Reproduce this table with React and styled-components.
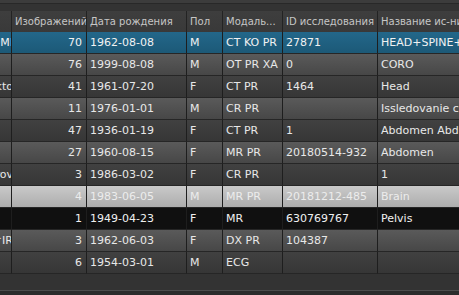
import React, { useLayoutEffect, useRef } from "react";
import styled, { createGlobalStyle, css } from "styled-components";

const GlobalStyle = createGlobalStyle`
  html, body {
    margin: 0;
    padding: 0;
    background: #2e2e2e;
  }
  * { box-sizing: border-box; }
`;

const columns = [
  { key: "name", width: 100, align: "clip" },
  { key: "images", title: "Изображений", width: 75, align: "right" },
  { key: "birth", title: "Дата рождения", width: 100 },
  { key: "sex", title: "Пол", width: 36 },
  { key: "modality", title: "Модаль...", width: 60 },
  { key: "studyId", title: "ID исследования", width: 95 },
  { key: "studyName", title: "Название ис-ния", width: 170 },
];

const rows = [
  { name: "KOVALEV^DMI", images: 70, birth: "1962-08-08", sex: "M", modality: "CT KO PR", studyId: "27871", studyName: "HEAD+SPINE+NECK", state: "selected" },
  { name: "", images: 76, birth: "1999-08-08", sex: "M", modality: "OT PR XA", studyId: "0", studyName: "CORO" },
  { name: "Pacient Ikto", images: 41, birth: "1961-07-20", sex: "F", modality: "CT PR", studyId: "1464", studyName: "Head" },
  { name: "", images: 11, birth: "1976-01-01", sex: "M", modality: "CR PR", studyId: "", studyName: "Issledovanie cheloveka" },
  { name: "", images: 47, birth: "1936-01-19", sex: "F", modality: "CT PR", studyId: "1", studyName: "Abdomen Abdomen" },
  { name: "", images: 27, birth: "1960-08-15", sex: "F", modality: "MR PR", studyId: "20180514-932", studyName: "Abdomen" },
  { name: "Petrov", images: 3, birth: "1986-03-02", sex: "F", modality: "CR PR", studyId: "", studyName: "1" },
  { name: "", images: 4, birth: "1983-06-05", sex: "M", modality: "MR PR", studyId: "20181212-485", studyName: "Brain", state: "light" },
  { name: "", images: 1, birth: "1949-04-23", sex: "F", modality: "MR", studyId: "630769767", studyName: "Pelvis", state: "hover" },
  { name: "SIDOROVA^IR", images: 3, birth: "1962-06-03", sex: "F", modality: "DX PR", studyId: "104387", studyName: "" },
  { name: "", images: 6, birth: "1954-03-01", sex: "M", modality: "ECG", studyId: "", studyName: "" },
];

const Page = styled.div`
  width: 459px;
  height: 295px;
  display: flex;
  flex-direction: column;
  background: #343434;
  font-family: "DejaVu Sans", Verdana, sans-serif;
  overflow: hidden;
`;

const TopStrip = styled.div`
  height: 11px;
  flex: none;
  background: linear-gradient(#3c3c3c 0, #3c3c3c 3px, #282828 3px, #282828 4px, #333 4px);
`;

const Viewport = styled.div`
  flex: none;
  overflow: hidden;
`;

const Grid = styled.div`
  display: grid;
  grid-template-columns: ${(p) => p.$template};
  width: max-content;
`;

const HeaderCell = styled.div`
  height: 21px;
  display: flex;
  align-items: center;
  padding: 0 3px;
  font-size: 10px;
  color: #c6c6c6;
  white-space: nowrap;
  overflow: hidden;
  background: linear-gradient(#3e3e3e, #393939);
  border-right: 1px solid #232323;
`;

const rowTones = {
  selected: css`
    background: linear-gradient(#23678a, #1c5977);
    color: #f2f2f2;
  `,
  light: css`
    background: linear-gradient(#c9c9c9, #adadad);
    color: #ececec;
  `,
  hover: css`
    background: #101010;
    color: #f0f0f0;
  `,
  odd: css`
    background: linear-gradient(#5a5a5a, #474747);
    color: #e8e8e8;
  `,
  even: css`
    background: linear-gradient(#414141, #363636);
    color: #e8e8e8;
  `,
};

const Cell = styled.div`
  height: 22px;
  display: flex;
  align-items: center;
  justify-content: ${(p) => (p.$align === "right" || p.$align === "clip" ? "flex-end" : "flex-start")};
  padding: ${(p) => (p.$align === "clip" ? "0" : "0 4px 0 3px")};
  font-size: 11px;
  white-space: nowrap;
  overflow: hidden;
  border-right: 1px solid #1e1e1e;
  border-bottom: 1px solid #262626;
  ${(p) => rowTones[p.$tone]}
`;

const ClipText = styled.span`
  margin-right: -2px;
`;

const Filler = styled.div`
  flex: 1;
  background: #333333;
  border-bottom: 1px solid #4c4c4c;
`;

const BottomBar = styled.div`
  height: 4px;
  flex: none;
  background: #2b2b2b;
`;

const SCROLL = 88;

export default function App() {
  const viewRef = useRef(null);

  useLayoutEffect(() => {
    if (viewRef.current) viewRef.current.scrollLeft = SCROLL;
  }, []);

  const template = columns.map((c) => `${c.width}px`).join(" ");

  return (
    <>
      <GlobalStyle />
      <Page>
        <TopStrip />
        <Viewport ref={viewRef}>
          <Grid $template={template}>
            {columns.map((c) => (
              <HeaderCell key={c.key}>{c.title}</HeaderCell>
            ))}
            {rows.map((r, i) => {
              const tone = r.state || (i % 2 === 1 ? "odd" : "even");
              return columns.map((c) => (
                <Cell key={`${i}-${c.key}`} $align={c.align} $tone={tone}>
                  {c.align === "clip" ? <ClipText>{r[c.key]}</ClipText> : r[c.key]}
                </Cell>
              ));
            })}
          </Grid>
        </Viewport>
        <Filler />
        <BottomBar />
      </Page>
    </>
  );
}
